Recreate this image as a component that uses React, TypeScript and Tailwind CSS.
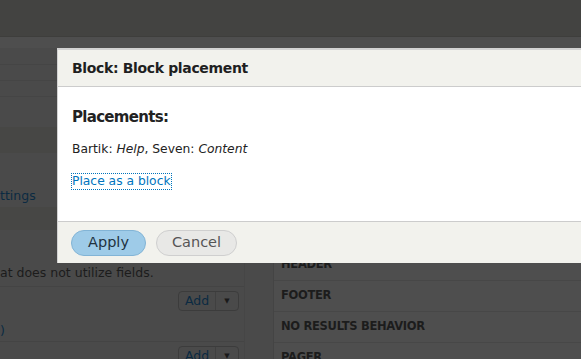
import React from 'react';

const font = { fontFamily: '"DejaVu Sans", Verdana, sans-serif' };

const AddButton = () => (
  <div className="flex h-[20px] items-center rounded-[4px] border border-[#3c3c3c] text-[12.5px] text-[#0b2a42]">
    <span className="w-[36px] text-center">Add</span>
    <span className="flex h-full w-[23px] items-center justify-center border-l border-[#404040] text-[7px] text-[#1a1a1a]">▼</span>
  </div>
);

const App = () => {
  return (
    <div className="relative h-[359px] w-[581px] overflow-hidden bg-[#4a4a4a]" style={font}>
      {/* page behind the overlay */}
      <div className="h-[36px] bg-[#434341]" />
      <div className="h-[12px] border-t border-[#3e3e3c] bg-[#4e4e4e]" />
      <div className="flex">
        <div className="w-[245px] border-r border-[#464646]">
          <div className="h-[17px] border-b border-[#454545]" />
          <div className="h-[16px] border-b border-[#454545]" />
          <div className="h-[16px] border-b border-[#454545]" />
          <div className="h-[30px]" />
          <div className="h-[26px] bg-[#474745]" />
          <div className="flex h-[54px] items-end pb-[1px] text-[12.5px] text-[#0b2a42]">
            <span>ttings</span>
          </div>
          <div className="h-[23px] bg-[#474745]" />
          <div className="flex h-[57px] items-end border-b border-[#444] pb-[3px] text-[12.5px] text-[#1c1c1c]">
            <span className="whitespace-nowrap">at does not utilize fields.</span>
          </div>
          <div className="flex h-[55px] flex-col border-b border-[#444]">
            <div className="flex justify-end pr-[5px] pt-[4px]">
              <AddButton />
            </div>
            <div className="mt-[11px] text-[12.5px] text-[#0b2a42]">
              <span>)</span>
            </div>
          </div>
          <div className="flex justify-end pr-[5px] pt-[4px]">
            <AddButton />
          </div>
        </div>
        <div className="w-[28px]" />
        <div className="flex-1 border-l border-[#444] bg-[#4e4e4e] pt-[202px] text-[11.5px] font-bold tracking-[-0.3px] text-[#1c1c1c]">
          {['HEADER', 'FOOTER', 'NO RESULTS BEHAVIOR', 'PAGER'].map((label) => (
            <div key={label} className="flex h-[31px] items-center border-b border-[#474747] pl-[7px]">
              {label}
            </div>
          ))}
        </div>
      </div>

      {/* dialog */}
      <div className="absolute left-[57px] top-[48px] w-[540px] border-l border-t-2 border-[#d2d2d2] bg-white">
        <div className="flex h-[37px] items-center border-b border-[#cccccc] bg-[#f2f2ed] pl-[14px] text-[14px] font-bold tracking-[-0.35px] text-[#1f1f1f]">
          Block: Block placement
        </div>
        <div className="h-[134px] pl-[14px] pt-[20px] text-[#222]">
          <h2 className="text-[15px] font-bold leading-[20px] tracking-[-0.7px]">Placements:</h2>
          <p className="mt-[14px] text-[12.3px] leading-[16px]">
            Bartik: <em>Help</em>, Seven: <em>Content</em>
          </p>
          <a
            href="#"
            className="mt-[17px] inline-block text-[12.3px] leading-[15px] text-[#0074bd] outline-1 outline-dotted outline-[#0074bd]"
          >
            Place as a block
          </a>
        </div>
        <div className="flex h-[42px] gap-[10px] border-t border-[#cccccc] bg-[#f2f2ed] pl-[13px] pt-[8px]">
          <button className="h-[26px] w-[75px] rounded-full border border-[#82b4d6] bg-[#9ecbe8] text-[14.5px] text-[#22323f]">
            Apply
          </button>
          <button className="h-[26px] w-[81px] rounded-full border border-[#cfcfcf] bg-[#e8e8e6] text-[14.5px] text-[#555]">
            Cancel
          </button>
        </div>
      </div>
    </div>
  );
};

export default App;
